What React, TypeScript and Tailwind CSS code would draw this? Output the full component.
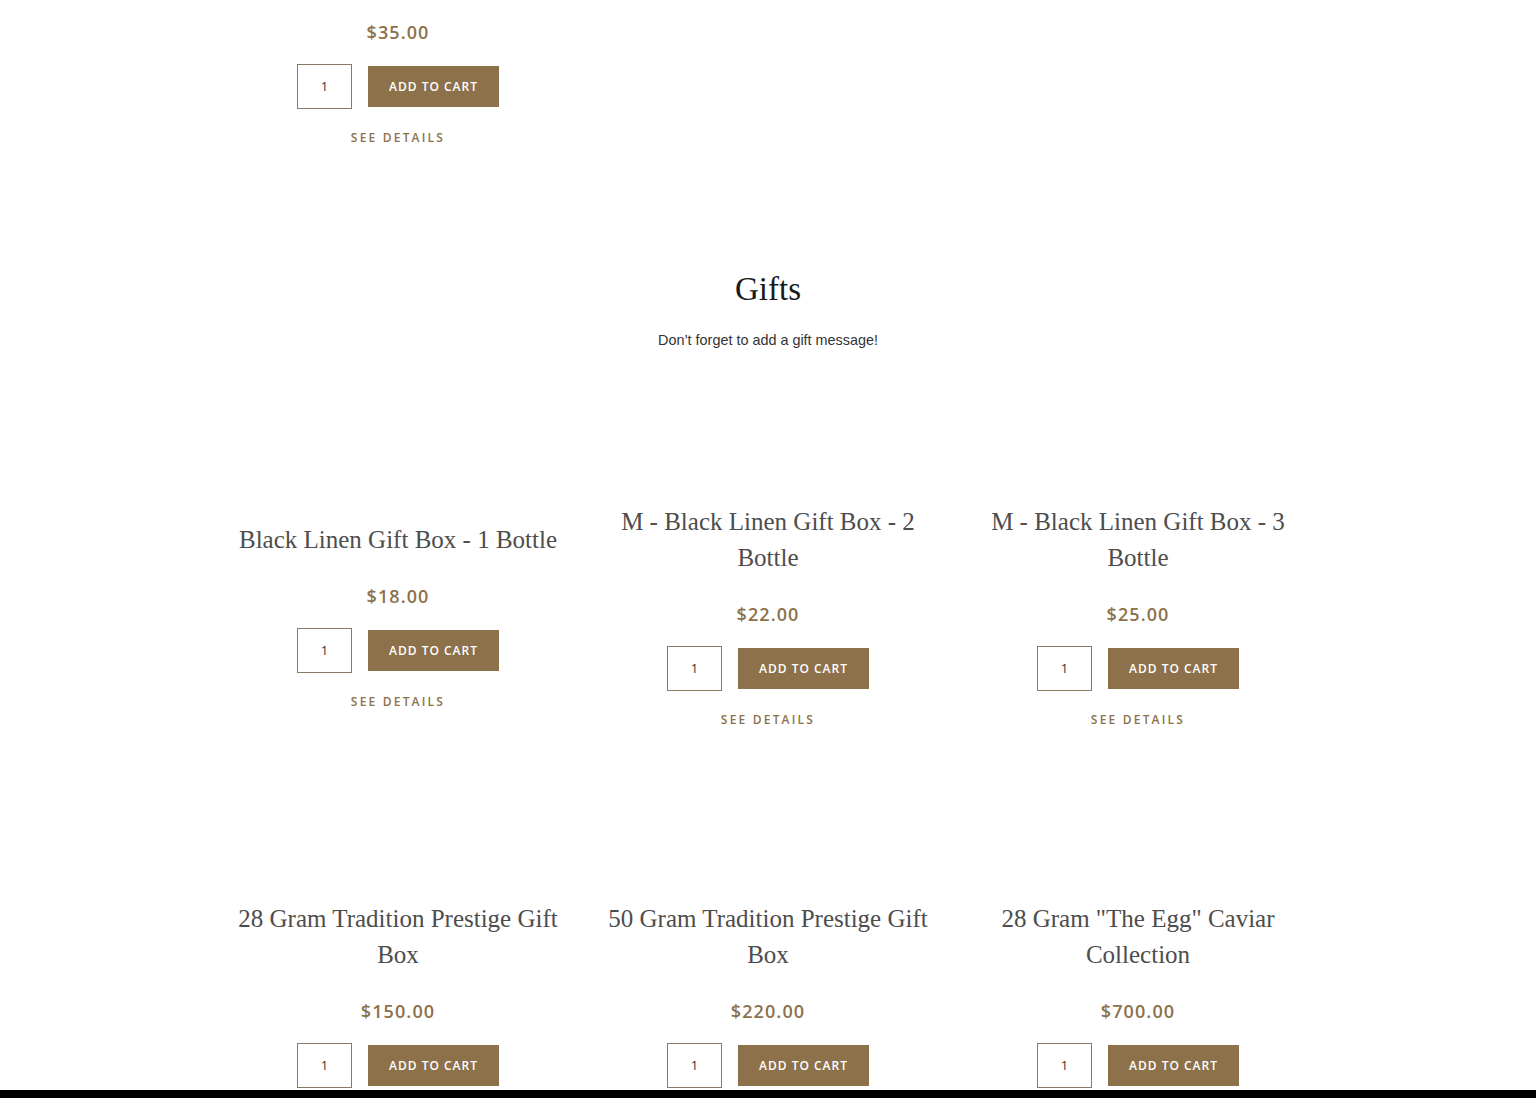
import React from "react";

const serif = { fontFamily: '"Liberation Serif", "Times New Roman", serif' };

type P = { lines: string[]; price: string };

const row1: P[] = [
  { lines: ["Black Linen Gift Box - 1 Bottle"], price: "$18.00" },
  { lines: ["M - Black Linen Gift Box - 2", "Bottle"], price: "$22.00" },
  { lines: ["M - Black Linen Gift Box - 3", "Bottle"], price: "$25.00" },
];
const row2: P[] = [
  { lines: ["28 Gram Tradition Prestige Gift", "Box"], price: "$150.00" },
  { lines: ["50 Gram Tradition Prestige Gift", "Box"], price: "$220.00" },
  { lines: ['28 Gram "The Egg" Caviar', "Collection"], price: "$700.00" },
];

function Buy({ price }: { price: string }) {
  return (
    <>
      <div className="text-[18px] leading-[24px] font-semibold text-[#8c714a] tracking-[1.1px] font-['Open_Sans',sans-serif]">
        {price}
      </div>
      <div className="mt-[20px] h-[45px] flex items-center justify-center gap-[16px]">
        <div className="w-[55px] h-[45px] border border-[#8a7a60] flex items-center justify-center text-[13px] text-[#333] font-['Open_Sans',sans-serif]">
          1
        </div>
        <button className="w-[131px] h-[41px] bg-[#8c714a] text-white text-[12px] font-semibold tracking-[1px] uppercase font-['Open_Sans',sans-serif]">
          ADD TO CART
        </button>
      </div>
      <div className="mt-[20px] text-[12px] leading-[18px] font-semibold tracking-[2.2px] text-[#8c714a] uppercase font-['Open_Sans',sans-serif]">
        SEE DETAILS
      </div>
    </>
  );
}

function Card({ p }: { p: P }) {
  return (
    <div className="px-[15px] text-center">
      <div style={serif} className="text-[25px] leading-[36px] text-[#4d4d4d]">
        {p.lines.map((l, i) => (
          <div key={i}>{l}</div>
        ))}
      </div>
      <div className="mt-[26px]">
        <Buy price={p.price} />
      </div>
    </div>
  );
}

export default function App() {
  return (
    <div className="bg-white h-[1098px] overflow-hidden relative">
      <div className="w-[1110px] mx-auto">
        <div className="grid grid-cols-3">
          <div className="px-[15px] text-center pt-[20px]">
            <Buy price="$35.00" />
          </div>
        </div>
        <h2 style={serif} className="mt-[122px] text-center text-[33px] leading-[40px] text-[#1a1a1a]">
          Gifts
        </h2>
        <p className="mt-[21px] text-center text-[14.4px] leading-[20px] text-[#333] font-['Liberation_Sans',Arial,sans-serif]">
          Don’t forget to add a gift message!
        </p>
        <div className="mt-[154px] grid grid-cols-3 items-center">
          {row1.map((p, i) => (
            <Card key={i} p={p} />
          ))}
        </div>
        <div className="mt-[172px] grid grid-cols-3 items-center">
          {row2.map((p, i) => (
            <Card key={i} p={p} />
          ))}
        </div>
      </div>
      <div className="fixed bottom-0 left-0 right-0 h-[8px] bg-black" />
    </div>
  );
}
